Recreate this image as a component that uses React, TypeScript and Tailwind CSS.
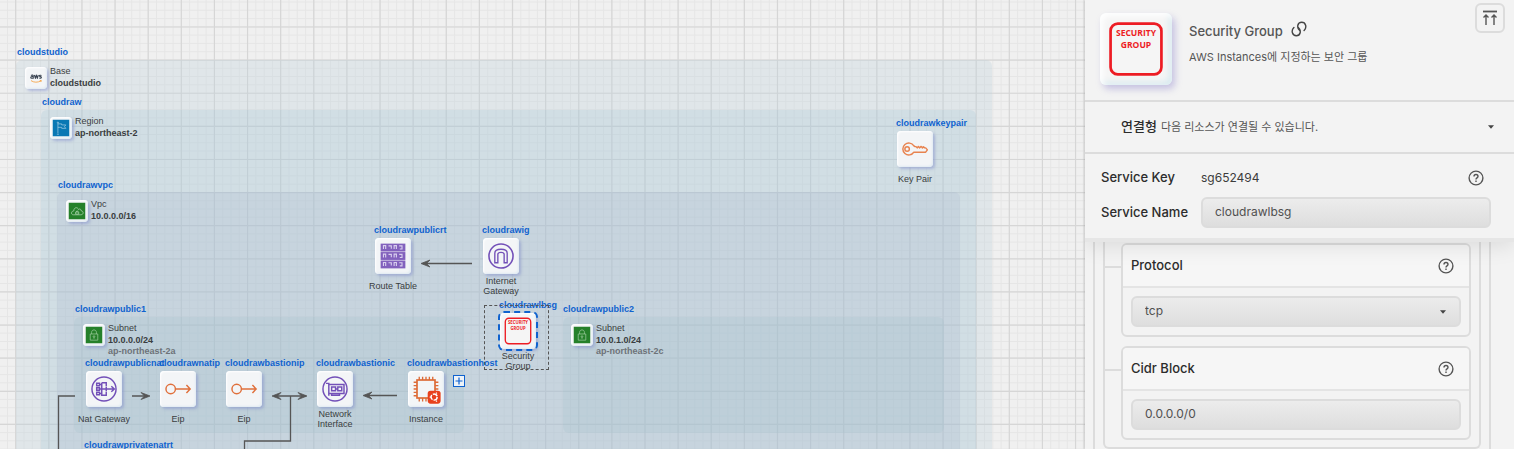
import { useState } from "react";
import type { ReactNode } from "react";

type IconName =
  | "aws" | "region" | "vpc" | "subnet" | "key" | "route" | "gateway"
  | "nat" | "eip" | "eni" | "instance" | "security";

const teeth = [10, 13, 16, 19, 22];

function ResourceIcon({ name, className = "h-full w-full" }: { name: IconName; className?: string }) {
  const draw: Record<IconName, ReactNode> = {
    aws: (
      <g transform="translate(3 3) scale(.82)">
        <g fill="none" stroke="#3a4452" strokeWidth="1.900" strokeLinejoin="round">
          <path d="M7 11.500c2-1.500 4-.8 4 1v4.500M11 13.500c-3-.5-4.500 0-4.500 1.500 0 1.800 3 1.800 4.500 0" />
          <path d="M13 10.500l1.800 6 1.700-6 1.700 6 1.800-6" />
          <path d="M25.500 11.500c-2-1.200-3.800-.5-3.500.9.3 1.300 3.500.8 3.500 2.500 0 1.500-2.500 1.900-4 .8" />
        </g>
        <path d="M7 20.500c5 3.600 12 3.600 17.500.5M22.500 20.500l2.800-.3-.8 2.800" fill="none" stroke="#f5a040" strokeWidth="1.500" />
      </g>
    ),
    region: (
      <g>
        <rect x="4" y="4" width="24" height="24" fill="#0a78b4" />
        <g fill="none" stroke="#a9d0e6" strokeWidth="1">
          <path d="M11.500 8.500v15M10 25h3" />
          <circle cx="11.500" cy="8" r=".8" />
          <path d="M11.500 10h5.500v1.500h6l-2 2.500 2 2.500h-6V15h-5.500" />
        </g>
      </g>
    ),
    vpc: (
      <g>
        <rect x="4" y="4" width="24" height="24" fill="#25802a" />
        <g fill="none" stroke="#b9dcb9" strokeWidth="1">
          <path d="M10.500 21.500h11c4.500 0 4.500-5.500.5-5.800 0-2.700-2.700-3.500-3.700-1.700-1.300-4.500-7.300-3.300-6.800 1.700-4.500.3-4.500 5.800-1 5.800z" />
          <path d="M14 17.500h4.500v3H14zM15 17.500c0-2.300 2.500-2.300 2.500 0" />
        </g>
      </g>
    ),
    subnet: (
      <g>
        <rect x="4" y="4" width="24" height="24" fill="#25802a" />
        <g fill="none" stroke="#a5cfa6" strokeWidth="1">
          <path d="M10.500 14.500h11v9h-11zM12.500 14.500v-2.500c0-4.500 7-4.500 7 0v2.500" />
          <circle cx="16" cy="18.300" r="1.200" />
          <path d="M16 19.500v2" />
        </g>
      </g>
    ),
    key: (
      <g fill="none" stroke="#e8834f" strokeWidth="1.300" strokeLinejoin="round">
        <path d="M15 13.200A5.300 5.300 0 1 0 15 18.800H25.500L27 16.800 25.500 15H24.500L23.500 14 22.500 15 21.500 13.700 20 15 19 13.700 18 15 17 13.900 16 13.900Z" />
        <circle cx="9" cy="16" r="2" />
      </g>
    ),
    route: (
      <g>
        {[5, 12.500, 20].map((y) => (
          <g key={y}>
            <rect x="5" y={y} width="22" height="7" fill="#8261bd" />
            <path d={`M7.500 ${y + 4.800}v-3h2v3M12 ${y + 2}h2.500v2.500M17 ${y + 4.800}v-3h2v3M21.500 ${y + 2}h2.500v2.800h-2`} fill="none" stroke="#d9cfee" strokeWidth="1" />
          </g>
        ))}
      </g>
    ),
    gateway: (
      <g fill="none" stroke="#7350b8">
        <circle cx="16" cy="16" r="10.700" strokeWidth="1.400" />
        <path d="M10.500 22v-8.500c0-4.700 11-4.700 11 0V22h-2.700v-7.500c0-2.300-5.600-2.300-5.600 0V22z" strokeWidth="1.200" />
      </g>
    ),
    nat: (
      <g fill="none" stroke="#7350b8" strokeWidth="1.300">
        <circle cx="16" cy="16" r="10.700" />
        <path d="M9.500 10.800h2.500v2.400H9.500zM9.500 14.800h2.500v2.400H9.500zM9.500 18.800h2.500v2.400H9.500z" />
        <path d="M12 12h2M12 16h13M12 20h2M14 10.500h4v3M14 10.500v11h4v-3M22.500 13.500l2.700 2.500-2.700 2.500M18 14v4" />
      </g>
    ),
    eip: (
      <g fill="none" stroke="#e0703c" strokeWidth="1.300">
        <circle cx="9.500" cy="16" r="4.200" />
        <path d="M13.700 16H26.500M23.500 12.500l3.300 3.500-3.300 3.500" />
      </g>
    ),
    eni: (
      <g fill="none" stroke="#7350b8" strokeWidth="1.300">
        <circle cx="16" cy="16" r="10.700" />
        <path d="M8 11h2.500v11M10.500 12H24v8H10.500M13 20v1.500h7V20" />
        <path d="M13 14.200h3.500v3.300H13zM18.500 14.200H22v3.300h-3.500zM16.500 16h2" />
      </g>
    ),
    instance: (
      <g fill="none" stroke="#dd6b37" strokeWidth="1.200">
        <rect x="8" y="8" width="16" height="16" strokeWidth="1.500" />
        {teeth.map((t) => (
          <path key={t} d={`M${t} 8v-3M${t} 24v3M8 ${t}h-3M24 ${t}h3`} />
        ))}
        <rect x="17.500" y="17.500" width="11.500" height="11.500" rx="2.500" fill="#e8401c" stroke="none" />
        <circle cx="23.200" cy="23.200" r="2.700" stroke="#fff" strokeWidth="1.300" strokeDasharray="4.600 1" />
        <path d="M19.300 23.200h1M25 20l.6-.8M25 26.400l.6.8" stroke="#fff" />
      </g>
    ),
    security: (
      <g>
        <rect x="4.700" y="4.700" width="22.600" height="22.600" rx="3.200" fill="#f5f5f5" stroke="#ed1c24" strokeWidth="1.200" />
        <g fill="#ed1c24" fontFamily="'Open Sans', 'Noto Sans', sans-serif" fontWeight="700" fontSize="3.800" textAnchor="middle">
          <text x="16" y="10.200">SECURITY</text>
          <text x="16" y="15.500">GROUP</text>
        </g>
      </g>
    ),
  };
  return (
    <svg viewBox="0 0 32 32" className={className} aria-hidden="true">
      {draw[name]}
    </svg>
  );
}

const zones = [
  { x: 16, y: 60, w: 976, h: 480, tint: "bg-[rgba(190,207,220,0.3)]" },
  { x: 41, y: 110, w: 935, h: 430, tint: "bg-[rgba(150,190,209,0.2)]" },
  { x: 57, y: 192, w: 903, h: 348, tint: "bg-[rgba(160,177,199,0.2)]" },
  { x: 74, y: 317, w: 390, h: 116, tint: "bg-[rgba(155,188,198,0.2)]" },
  { x: 563, y: 317, w: 381, h: 116, tint: "bg-[rgba(155,188,198,0.2)]" },
];

const groups: { x: number; y: number; icon: IconName; title: string; kind: string; name: string; note?: string }[] = [
  { x: 17, y: 47, icon: "aws", title: "cloudstudio", kind: "Base", name: "cloudstudio" },
  { x: 42, y: 97, icon: "region", title: "cloudraw", kind: "Region", name: "ap-northeast-2" },
  { x: 58, y: 180, icon: "vpc", title: "cloudrawvpc", kind: "Vpc", name: "10.0.0.0/16" },
  { x: 75, y: 304, icon: "subnet", title: "cloudrawpublic1", kind: "Subnet", name: "10.0.0.0/24", note: "ap-northeast-2a" },
  { x: 563, y: 304, icon: "subnet", title: "cloudrawpublic2", kind: "Subnet", name: "10.0.1.0/24", note: "ap-northeast-2c" },
];

const nodes: { x: number; y: number; icon: IconName; title: string; lines: string[]; selected?: boolean }[] = [
  { x: 897, y: 131, icon: "key", title: "cloudrawkeypair", lines: ["Key Pair"] },
  { x: 375, y: 238, icon: "route", title: "cloudrawpublicrt", lines: ["Route Table"] },
  { x: 483, y: 238, icon: "gateway", title: "cloudrawig", lines: ["Internet", "Gateway"] },
  { x: 86, y: 371, icon: "nat", title: "cloudrawpublicnat", lines: ["Nat Gateway"] },
  { x: 160, y: 371, icon: "eip", title: "cloudrawnatip", lines: ["Eip"] },
  { x: 226, y: 371, icon: "eip", title: "cloudrawbastionip", lines: ["Eip"] },
  { x: 317, y: 371, icon: "eni", title: "cloudrawbastionic", lines: ["Network", "Interface"] },
  { x: 408, y: 371, icon: "instance", title: "cloudrawbastionhost", lines: ["Instance"] },
  { x: 500, y: 313, icon: "security", title: "cloudrawlbsg", lines: ["Security", "Group"], selected: true },
];

const GRID = 8.28;
const lines = (step: number, offset: number, count: number) =>
  Array.from({ length: count }, (_, i) => offset + i * step);

function Grid() {
  const minorX = lines(GRID, -0.8, 320).map((x) => `M${x} 0V1400`).join("");
  const minorY = lines(GRID, 2, 170).map((y) => `M0 ${y}H2600`).join("");
  const majorX = lines(GRID * 4, 15.700, 80).map((x) => `M${x} 0V1400`).join("");
  const majorY = lines(GRID * 4, 27, 42).map((y) => `M0 ${y}H2600`).join("");
  return (
    <svg className="absolute inset-0 h-full w-full" aria-hidden="true">
      <path d={minorX + minorY} stroke="#e6e6e6" strokeWidth="1" />
      <path d={majorX + majorY} stroke="#d6d6d6" strokeWidth="1.200" />
    </svg>
  );
}

function Links() {
  return (
    <svg className="absolute inset-0 h-full w-full" fill="none" stroke="#555" strokeWidth="1.300" aria-hidden="true">
      <path d="M472 263.500H423M132 396H148M274 396H306M397 395.500H365M75 396H58.500V460M290.500 396V441H244.500V460" />
      <g fill="#555" strokeWidth=".8">
        <path d="M421 263.500l9-3.500-3.500 3.500 3.500 3.500z" />
        <path d="M150 396l-9-3.500 3.500 3.500-3.500 3.500z" />
        <path d="M272 396l9-3.500-3.500 3.500 3.500 3.500z" />
        <path d="M307 396l-9-3.500 3.500 3.500-3.500 3.500z" />
        <path d="M363 395.500l9-3.500-3.500 3.500 3.500 3.500z" />
      </g>
    </svg>
  );
}

const titleStyle = "whitespace-nowrap text-[9px] leading-[10px] font-bold text-[#0f62cf]";
const tileStyle = "bg-[#f3f5f7] shadow-[2px_2px_3px_rgba(120,130,200,0.45),inset_1px_1px_2px_#fff,inset_-1px_-1px_2px_#dfeaf2]";

function Canvas() {
  return (
    <main className="relative min-w-0 flex-1 overflow-hidden bg-[#f0f0f0] font-['Liberation_Sans',Arial,sans-serif] text-[9px] text-[#3a3d40]">
      <Grid />
      {zones.map((z) => (
        <div key={`${z.x}-${z.y}`} className={`absolute rounded-md ${z.tint}`} style={{ left: z.x, top: z.y, width: z.w, height: z.h }} />
      ))}
      {groups.map((g) => (
        <div key={g.title} className="absolute" style={{ left: g.x, top: g.y }}>
          <div className={titleStyle}>{g.title}</div>
          <div className="flex gap-[3px] pt-[9px] pl-2">
            <div className={`mt-px h-[22px] w-[22px] shrink-0 rounded-sm ${tileStyle}`}>
              <ResourceIcon name={g.icon} />
            </div>
            <div className="whitespace-nowrap">
              <div className="leading-[10px]">{g.kind}</div>
              <div className="leading-[14px] font-bold">{g.name}</div>
              {g.note && <div className="leading-[8px] font-bold text-[#6d7278]">{g.note}</div>}
            </div>
          </div>
        </div>
      ))}
      <Links />
      {nodes.map((n) => (
        <div key={n.title} className="absolute w-9" style={{ left: n.x, top: n.y }}>
          <div className={`absolute -top-[13px] -left-px ${titleStyle}`}>{n.title}</div>
          {n.selected && <div className="absolute -top-2 -left-4 h-[65px] w-[65px] border border-dashed border-[#555]" />}
          <div className={`h-9 w-9 rounded ${tileStyle} ${n.selected ? "outline-2 outline-dashed outline-[#0f62cf]" : ""}`}>
            <ResourceIcon name={n.icon} />
          </div>
          <div className="-mx-4 flex h-6 flex-col justify-center text-center leading-[10px]">
            {n.lines.map((t) => (
              <span key={t} className="whitespace-nowrap">{t}</span>
            ))}
          </div>
        </div>
      ))}
      <div className={`absolute top-[440px] left-[84px] ${titleStyle}`}>cloudrawprivatenatrt</div>
      <button type="button" aria-label="Expand instance" className="absolute top-[375px] left-[453px] flex h-3 w-3 items-center justify-center border border-[#0f62cf] bg-[#eef3f8] text-[#0f62cf]">
        <svg viewBox="0 0 10 10" className="h-2.5 w-2.5" stroke="currentColor" strokeWidth="1.200">
          <path d="M5 1.500v7M1.500 5h7" />
        </svg>
      </button>
    </main>
  );
}

function HelpButton({ label }: { label: string }) {
  return (
    <button type="button" aria-label={`Help: ${label}`} className="shrink-0 text-[#555]">
      <svg viewBox="0 0 16 16" className="h-4 w-4" fill="none" stroke="currentColor" strokeWidth="1.400">
        <circle cx="8" cy="8" r="6.900" />
        <path d="M6 6.500c0-2.600 4-2.600 4 0 0 1.400-2 1.400-2 2.900" />
        <path d="M8 10.600v1.400" />
      </svg>
    </button>
  );
}

function Caret() {
  return (
    <svg viewBox="0 0 6 4" className="h-1 w-1.5" fill="#444" aria-hidden="true">
      <path d="M0 .3h6L3 3.700z" />
    </svg>
  );
}

const fieldStyle =
  "h-[31px] w-full min-w-0 appearance-none rounded-md border-2 border-[#dcdcdc] bg-linear-to-b from-[#ececec] to-[#dedede] px-3 pb-0.5 text-[12px] text-[#505050] outline-none";

function PropertyCard({ label, id, children }: { label: string; id: string; children: ReactNode }) {
  return (
    <div className="flex">
      <div className="mt-[23px] h-0.5 w-4 shrink-0 bg-[#dcdcdc]" />
      <div className="min-w-0 flex-1 rounded-md border-2 border-[#dcdcdc]">
        <div className="flex h-[43px] items-center justify-between rounded-t border-b-2 border-[#e4e4e4] bg-[#f6f6f6] pr-[15px] pl-2">
          <label htmlFor={id} className="text-[13px] font-medium text-[#2c2c2c]">{label}</label>
          <HelpButton label={label} />
        </div>
        <div className="p-2">{children}</div>
      </div>
    </div>
  );
}

function Inspector() {
  const [open, setOpen] = useState(false);
  const [name, setName] = useState("cloudrawlbsg");
  const [cidr, setCidr] = useState("0.0.0.0/0");
  return (
    <aside className="z-10 flex w-[429px] shrink-0 flex-col overflow-hidden bg-[#f3f3f3] font-[Inter,'Noto_Sans_CJK_KR',sans-serif] shadow-[-1px_0_2px_rgba(0,0,0,0.15)]">
      <div className="relative z-10 shrink-0 bg-[#f3f3f3] shadow-[0_4px_0_#e6e6e6,0_8px_20px_rgba(0,0,0,0.10)]">
        <header className="flex items-start border-b-2 border-[#dcdcdc] pt-[3px] pr-[9px] pb-[15px] pl-[15px]">
          <div className="mt-[10px] h-[72px] w-[72px] shrink-0 rounded-md bg-[#f5f5f5] shadow-[3px_4px_7px_rgba(130,120,200,0.40),inset_3px_3px_6px_#fff,inset_-3px_-3px_6px_#d8eaf0]">
            <ResourceIcon name="security" />
          </div>
          <div className="mt-[17px] ml-[17px] flex-1">
            <div className="flex items-center gap-2">
              <h1 className="text-[13px] leading-[22px] font-medium text-[#555]">Security Group</h1>
              <a href="#security-group" aria-label="Documentation" className="-mt-1 text-[#444]">
                <svg viewBox="0 0 16 16" className="h-4 w-4" fill="none" stroke="currentColor" strokeWidth="1.400" strokeLinecap="round">
                  <path d="M2.900 6.600C-.2 9.600 1.200 14.700 5.300 14.700 9.600 14.700 10.600 9.500 7.300 6.600" />
                  <path d="M13.100 9.400C16.200 6.400 14.800 1.300 10.700 1.300 6.400 1.300 5.400 6.500 8.700 9.400" />
                </svg>
              </a>
            </div>
            <p className="mt-1 text-[11px] leading-[22px] text-[#555]">AWS Instances에 지정하는 보안 그룹</p>
          </div>
          <button type="button" aria-label="Collapse all" className="flex h-[30px] w-[30px] items-center justify-center rounded-md border-2 border-[#dcdcdc] text-[#555]">
            <svg viewBox="0 0 16 16" className="h-4 w-4" fill="none" stroke="currentColor" strokeWidth="1.400">
              <path d="M1 1.500h14" strokeWidth="1.800" />
              <path d="M4 15V5M1.500 7.500L4 5l2.500 2.500M12 15V5M9.500 7.500L12 5l2.500 2.500" />
            </svg>
          </button>
        </header>
        <button type="button" aria-expanded={open} onClick={() => setOpen(!open)} className="flex h-[52px] w-full items-center border-b-2 border-[#dcdcdc] pr-5 pl-9 text-left">
          <span className="text-[13px] font-medium text-[#2c2c2c]">연결형</span>
          <span className="ml-1 flex-1 text-[11px] text-[#555]">다음 리소스가 연결될 수 있습니다.</span>
          <Caret />
        </button>
        <div className="grid grid-cols-[100px_1fr] items-center gap-y-1 pt-2 pr-[23px] pb-[10px] pl-4">
          <span className="text-[13px] font-medium text-[#2c2c2c]">Service Key</span>
          <div className="flex h-[31px] items-center justify-between pr-[7px]">
            <span className="text-[12px] text-[#3c3c3c]">sg652494</span>
            <HelpButton label="Service Key" />
          </div>
          <label htmlFor="service-name" className="text-[13px] font-medium text-[#2c2c2c]">Service Name</label>
          <input id="service-name" value={name} onChange={(e) => setName(e.target.value)} className={fieldStyle} />
        </div>
      </div>
      <div className="min-h-0 flex-1 overflow-hidden">
        <div className="mr-[23px] ml-2 h-full border-x-2 border-[#dcdcdc] px-2">
          <div className="flex flex-col gap-[9px] rounded-b-md border-x-2 border-b-2 border-[#dcdcdc] pt-[5px] pr-2 pb-[7px]">
            <PropertyCard label="Protocol" id="protocol">
              <div className="grid items-center">
                <select id="protocol" defaultValue="tcp" className={`col-start-1 row-start-1 ${fieldStyle}`}>
                  <option>tcp</option>
                  <option>udp</option>
                </select>
                <span className="pointer-events-none col-start-1 row-start-1 mr-[15px] justify-self-end">
                  <Caret />
                </span>
              </div>
            </PropertyCard>
            <PropertyCard label="Cidr Block" id="cidr-block">
              <input id="cidr-block" value={cidr} onChange={(e) => setCidr(e.target.value)} className={`block ${fieldStyle}`} />
            </PropertyCard>
          </div>
        </div>
      </div>
    </aside>
  );
}

export default function App() {
  return (
    <div className="flex h-screen overflow-hidden">
      <Canvas />
      <Inspector />
    </div>
  );
}
